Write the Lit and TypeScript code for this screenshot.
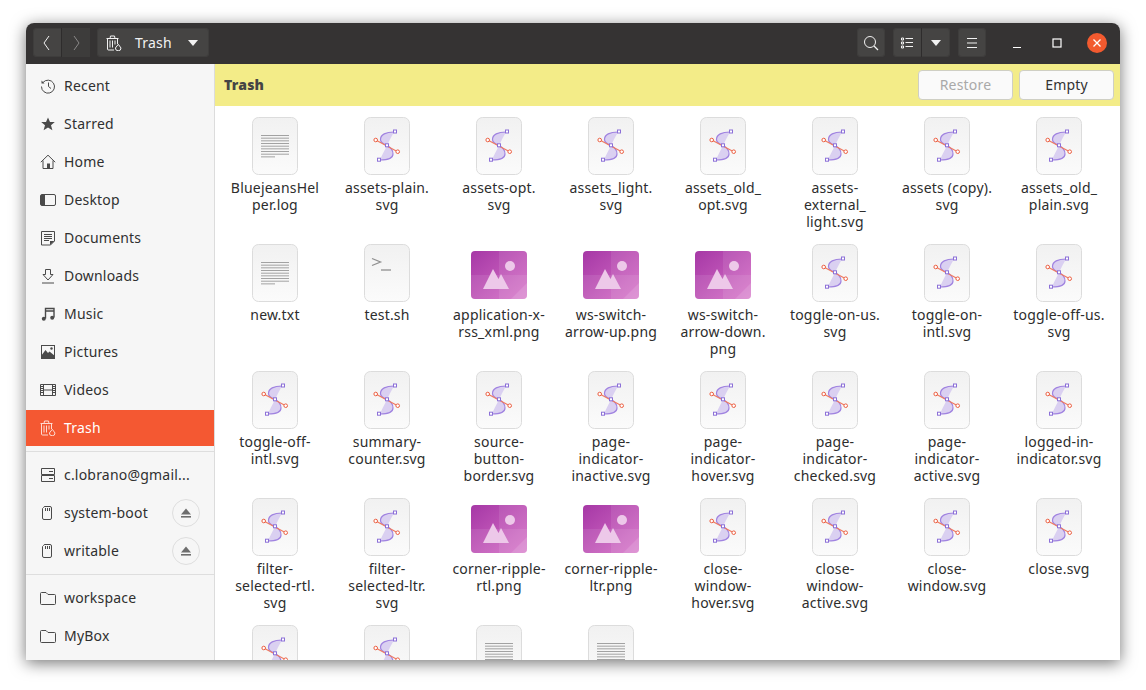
import { LitElement, html, svg, css } from "lit";
import { customElement } from "lit/decorators.js";

type Kind = "doc" | "svg" | "term" | "png";

const files: [string, Kind][] = [
  ["BluejeansHel\nper.log", "doc"],
  ["assets-plain.\nsvg", "svg"],
  ["assets-opt.\nsvg", "svg"],
  ["assets_light.\nsvg", "svg"],
  ["assets_old_\nopt.svg", "svg"],
  ["assets-\nexternal_\nlight.svg", "svg"],
  ["assets (copy).\nsvg", "svg"],
  ["assets_old_\nplain.svg", "svg"],
  ["new.txt", "doc"],
  ["test.sh", "term"],
  ["application-x-\nrss_xml.png", "png"],
  ["ws-switch-\narrow-up.png", "png"],
  ["ws-switch-\narrow-down.\npng", "png"],
  ["toggle-on-us.\nsvg", "svg"],
  ["toggle-on-\nintl.svg", "svg"],
  ["toggle-off-us.\nsvg", "svg"],
  ["toggle-off-\nintl.svg", "svg"],
  ["summary-\ncounter.svg", "svg"],
  ["source-\nbutton-\nborder.svg", "svg"],
  ["page-\nindicator-\ninactive.svg", "svg"],
  ["page-\nindicator-\nhover.svg", "svg"],
  ["page-\nindicator-\nchecked.svg", "svg"],
  ["page-\nindicator-\nactive.svg", "svg"],
  ["logged-in-\nindicator.svg", "svg"],
  ["filter-\nselected-rtl.\nsvg", "svg"],
  ["filter-\nselected-ltr.\nsvg", "svg"],
  ["corner-ripple-\nrtl.png", "png"],
  ["corner-ripple-\nltr.png", "png"],
  ["close-\nwindow-\nhover.svg", "svg"],
  ["close-\nwindow-\nactive.svg", "svg"],
  ["close-\nwindow.svg", "svg"],
  ["close.svg", "svg"],
  ["", "svg"],
  ["", "svg"],
  ["", "doc"],
  ["", "doc"],
];

const sheet = svg`
  <defs>
    <linearGradient id="sh" x1="0" y1="0" x2="0" y2="1">
      <stop offset="0" stop-color="#f1f1f1"/>
      <stop offset="1" stop-color="#fbfbfb"/>
    </linearGradient>
  </defs>
  <rect x=".5" y=".5" width="45" height="57" rx="6" fill="url(#sh)" stroke="#dcdcdc"/>`;

function docIcon() {
  const lines = [];
  for (let i = 0; i < 9; i++) {
    const y = 18.5 + i * 2.67;
    lines.push(svg`<line x1="9" x2=${i === 8 ? 23 : 37} y1=${y} y2=${y} stroke="#a2a2a2"/>`);
  }
  return html`<svg width="46" height="58" viewBox="0 0 46 58">${sheet}${lines}</svg>`;
}

function svgIcon() {
  return html`<svg width="46" height="58" viewBox="0 0 46 58">
    ${sheet}
    <path d="M30 15C22 15 16.5 17.5 16.5 22.5C16.5 26 20 27 23 28.5C26 30 29 32 29 37C29 41 24 43 16 43C18 38 20.500 33.500 23 28.500C25 24 27.500 19.500 30 15Z" fill="#dad0f1"/>
    <path d="M30 15C22 15 16.500 17.500 16.500 22.500C16.500 26 20 27 23 28.500C26 30 29 32 29 37C29 41 24 43 16 43" fill="none" stroke="#a083e0" stroke-width="1.2"/>
    <path d="M11.7 23L33.7 34.7" stroke="#f07a60" stroke-width="1.2"/>
    <circle cx="11.7" cy="23" r="1.8" fill="#fff" stroke="#ec5f42"/>
    <circle cx="33.7" cy="34.7" r="1.8" fill="#fff" stroke="#ec5f42"/>
    <rect x="29.500" y="13" width="3" height="3" fill="#fff" stroke="#8c70d8"/>
    <rect x="21.500" y="26.800" width="3" height="3" fill="#fff" stroke="#8c70d8"/>
    <rect x="13.500" y="41.200" width="3" height="3" fill="#fff" stroke="#8c70d8"/>
  </svg>`;
}

function termIcon() {
  return html`<svg width="46" height="58" viewBox="0 0 46 58">
    ${sheet}
    <path d="M8 14.500L16.500 18L8 21.500" fill="none" stroke="#8f8f8f" stroke-width="1.300"/>
    <path d="M17 26H27" stroke="#8f8f8f" stroke-width="1.300"/>
  </svg>`;
}

function pngIcon() {
  return html`<svg class="png" width="56" height="48" viewBox="0 0 56 48">
    <defs>
      <linearGradient id="pg" x1="0" y1="0" x2="1" y2="1">
        <stop offset="0" stop-color="#a638a6"/>
        <stop offset="1" stop-color="#d56fc6"/>
      </linearGradient>
    </defs>
    <rect width="56" height="48" rx="4" fill="url(#pg)"/>
    <path d="M28 0H52a4 4 0 0 1 4 4V44a4 4 0 0 1-4 4H28Z" fill="#fff" fill-opacity=".09"/>
    <path d="M0 24H56V44a4 4 0 0 1-4 4H4a4 4 0 0 1-4-4Z" fill="#fff" fill-opacity=".09"/>
    <path d="M56 32V44a4 4 0 0 1-4 4H40Z" fill="#fff" fill-opacity=".12"/>
    <circle cx="39" cy="15" r="5" fill="#edc8e9"/>
    <path d="M12 38L22 18L27.500 28L30 23L38 38Z" fill="#edc8e9"/>
  </svg>`;
}

const icons: Record<Kind, () => unknown> = { doc: docIcon, svg: svgIcon, term: termIcon, png: pngIcon };

// icono de papelera, se usa en la barra y en la lista
const trashPaths = svg`
  <path d="M.5 3.500H12.500M4 3.500L4.500 1H8.500L9 3.500" fill="none" stroke="currentColor"/>
  <path d="M1.500 3.500V14A1 1 0 0 0 2.500 15H8M11.500 3.500V9" fill="none" stroke="currentColor"/>
  <path d="M4 5.500V12.500M6.500 5.500V12.500M9 5.500V9.500" stroke="currentColor"/>
  <path d="M12.300 9.300L15 13A2.800 2.800 0 0 1 9.400 13Z" fill="none" stroke="currentColor"/>`;

const sideIcons: Record<string, unknown> = {
  recent: svg`<path d="M3 4.500A6.500 6.500 0 1 1 1.500 8.500" fill="none" stroke="currentColor"/><path d="M1.500 2.500V5.500H4.500Z" fill="currentColor"/><path d="M8.500 4.500V8.500L11 10.500" fill="none" stroke="currentColor"/>`,
  star: svg`<path d="M8 1.500L10 6H14.800L11 9.200L12.400 14.200L8 11.400L3.600 14.200L5 9.200L1.200 6H6Z" fill="currentColor"/>`,
  home: svg`<path d="M.8 8.200L8 1.200L15.200 8.200" fill="none" stroke="currentColor"/><path d="M3 6.500V14.500H13V6.500" fill="none" stroke="currentColor"/><path d="M7 14.500V9.500H10V14.500" fill="currentColor"/>`,
  desktop: svg`<rect x=".5" y="2.500" width="15" height="11" rx="1.500" fill="none" stroke="currentColor"/><path d="M1 3H5V13H1Z" fill="currentColor"/>`,
  docs: svg`<path d="M1.500 1.500H14.500V11L10.500 15H1.500Z" fill="none" stroke="currentColor"/><path d="M4 4.500H12M4 6.500H12M4 8.500H12M4 10.500H9" stroke="currentColor"/><path d="M10 15V11H14.500Z" fill="currentColor"/>`,
  down: svg`<path d="M5.500 1.500H10.500V6.500H13L8 12L3 6.500H5.500Z" fill="none" stroke="currentColor"/><path d="M2 15H14" stroke="currentColor"/>`,
  music: svg`<path d="M5.500 12.500V2.500H14V11.500M5.500 5H14" fill="none" stroke="currentColor" stroke-width="1.400"/><circle cx="3.800" cy="12.800" r="2" fill="currentColor"/><circle cx="12.200" cy="11.800" r="2" fill="currentColor"/>`,
  pics: svg`<rect x="1.500" y="1.500" width="13" height="13" fill="none" stroke="currentColor"/><path d="M1 12L5.500 6L8 9L9.500 7.500L15 12V15H1Z" fill="currentColor"/><circle cx="11.500" cy="4.500" r="1.200" fill="currentColor"/>`,
  video: svg`<path d="M.5 2.500H15.500V13.500H.5ZM3.500 2.500V13.500M12.500 2.500V13.500M3.500 8H12.500" fill="none" stroke="currentColor"/><path d="M1 4.500H3M1 6.500H3M1 8.500H3M1 10.500H3M13 4.500H15M13 6.500H15M13 8.500H15M13 10.500H15" stroke="currentColor"/>`,
  trash: trashPaths,
  server: svg`<path d="M1.500 1.500H14.500V7.500H1.500ZM1.500 8.500H14.500V14.500H1.500Z" fill="none" stroke="currentColor"/><path d="M9 4.500H13M9 11.500H13" stroke="currentColor"/>`,
  disk: svg`<path d="M3.500 2.500A1.500 1.500 0 0 1 5 1.500H10A1.500 1.500 0 0 1 11.500 3V13A1.500 1.500 0 0 1 10 14.500H4A1.500 1.500 0 0 1 2.500 13V3.500Z" fill="none" stroke="currentColor"/><path d="M5.500 3V6M7.500 3V6M9.500 3V6" stroke="currentColor"/>`,
  folder: svg`<path d="M.5 3.500A1 1 0 0 1 1.500 2.500H6L8 4.500H14.500A1 1 0 0 1 15.500 5.500V13.500A1 1 0 0 1 14.500 14.500H1.500A1 1 0 0 1 .5 13.500Z" fill="none" stroke="currentColor"/>`,
};

const sideGroups: { icon: string; label: string; selected?: boolean; eject?: boolean }[][] = [
  [
    { icon: "recent", label: "Recent" },
    { icon: "star", label: "Starred" },
    { icon: "home", label: "Home" },
    { icon: "desktop", label: "Desktop" },
    { icon: "docs", label: "Documents" },
    { icon: "down", label: "Downloads" },
    { icon: "music", label: "Music" },
    { icon: "pics", label: "Pictures" },
    { icon: "video", label: "Videos" },
    { icon: "trash", label: "Trash", selected: true },
  ],
  [
    { icon: "server", label: "c.lobrano@gmail..." },
    { icon: "disk", label: "system-boot", eject: true },
    { icon: "disk", label: "writable", eject: true },
  ],
  [
    { icon: "folder", label: "workspace" },
    { icon: "folder", label: "MyBox" },
  ],
];

@customElement("app-root")
export class AppRoot extends LitElement {
  static styles = css`
    :host {
      display: block;
      height: 690px;
      padding: 23px 26px 0;
      box-sizing: border-box;
      background: #fff;
      font-family: "Noto Sans", sans-serif;
      font-size: 14px;
      letter-spacing: 0.2px;
      color: #2f2f2f;
    }
    .window {
      height: 637px;
      display: flex;
      flex-direction: column;
      border-radius: 8px 8px 0 0;
      overflow: hidden;
      background: #fff;
      box-shadow: 0 3px 16px rgba(0, 0, 0, 0.55);
    }
    .titlebar {
      flex: none;
      height: 41px;
      box-sizing: border-box;
      padding: 5px 0 0 7px;
      display: flex;
      background: #353333;
      color: #f2f2f2;
    }
    .group {
      display: flex;
      height: 29px;
      border-radius: 4px;
      background: #454443;
      box-shadow: inset 0 0 0 1px #3e3d3c;
    }
    .tb {
      width: 28px;
      display: flex;
      align-items: center;
      justify-content: center;
    }
    .tb + .tb {
      border-left: 1px solid #2e2c2c;
    }
    .tb.off {
      color: #8a8988;
      background: #3d3c3b;
    }
    .nav {
      margin-right: 7px;
    }
    .pathbar {
      width: 112px;
      align-items: center;
      padding-left: 9px;
      box-sizing: border-box;
    }
    .pathbar span {
      margin: 0 15px 0 13px;
    }
    .spacer {
      flex: 1;
    }
    .search {
      margin-right: 8px;
    }
    .view {
      margin-right: 8px;
    }
    .wm {
      width: 134px;
      height: 29px;
      box-sizing: border-box;
      padding-left: 11px;
      display: flex;
      align-items: center;
    }
    .wm div {
      width: 40px;
      display: flex;
      justify-content: center;
    }
    .close {
      width: 20px;
      height: 20px;
      border-radius: 50%;
      background: #f25a2f;
      display: flex;
      align-items: center;
      justify-content: center;
    }
    .body {
      flex: 1;
      display: flex;
      min-height: 0;
    }
    .sidebar {
      flex: none;
      width: 189px;
      box-sizing: border-box;
      padding-top: 4px;
      background: #f6f6f6;
      border-right: 1px solid #dcdcdc;
      color: #333;
    }
    .sep {
      height: 1px;
      margin: 5px 0;
      background: #dedede;
    }
    .row {
      height: 36px;
      margin-bottom: 2px;
      padding-left: 14px;
      display: flex;
      align-items: center;
      gap: 8px;
      color: #303030;
    }
    .row span {
      margin-top: -2px;
    }
    .row svg {
      flex: none;
      color: #4a4a4a;
    }
    .row.selected {
      background: #f45832;
      color: #fff;
    }
    .row.selected svg {
      color: #fddbd2;
    }
    .row:last-child {
      margin-bottom: 0;
    }
    .eject {
      margin: 0 14px 0 auto;
      width: 26px;
      height: 26px;
      border: 1px solid #dedede;
      border-radius: 50%;
      display: flex;
      align-items: center;
      justify-content: center;
    }
    .main {
      flex: 1;
      min-width: 0;
      display: flex;
      flex-direction: column;
    }
    .infobar {
      flex: none;
      height: 42px;
      box-sizing: border-box;
      padding: 6px 6px 6px 9px;
      display: flex;
      align-items: center;
      gap: 6px;
      background: #f3ec88;
      font-weight: 700;
      color: #454545;
    }
    .infobar b {
      flex: 1;
      margin-top: -2px;
    }
    .btn {
      width: 95px;
      height: 30px;
      box-sizing: border-box;
      padding-bottom: 2px;
      border: 1px solid #cfcfc4;
      border-radius: 4px;
      background: #fafafa;
      display: flex;
      align-items: center;
      justify-content: center;
      font-weight: 400;
      color: #333;
    }
    .btn.off {
      color: #a9a9a9;
    }
    .grid {
      flex: 1;
      min-height: 0;
      overflow: hidden;
      padding: 11px 0 0 4px;
      display: grid;
      grid-template-columns: repeat(8, 112px);
      grid-auto-rows: 127px;
    }
    .file {
      display: flex;
      flex-direction: column;
      align-items: center;
    }
    .thumb {
      height: 58px;
      margin-bottom: 4px;
      flex: none;
    }
    .thumb svg {
      display: block;
    }
    .thumb .png {
      margin-top: 7px;
    }
    .name {
      white-space: pre;
      text-align: center;
      line-height: 17px;
      color: #2d2d2d;
    }
  `;

  sideRow(item: { icon: string; label: string; selected?: boolean; eject?: boolean }) {
    return html`
      <div class="row ${item.selected ? "selected" : ""}">
        <svg width="16" height="16" viewBox="0 0 16 16">${sideIcons[item.icon]}</svg>
        <span>${item.label}</span>
        ${item.eject
          ? html`<div class="eject">
              <svg width="12" height="12" viewBox="0 0 12 12">
                <path d="M6 1.500L11 7.500H1Z" fill="#6e6e6e"/><rect x="1" y="9" width="10" height="1.600" fill="#6e6e6e"/>
              </svg>
            </div>`
          : ""}
      </div>
    `;
  }

  render() {
    return html`
      <div class="window">
        <div class="titlebar">
          <div class="group nav">
            <div class="tb">
              <svg width="16" height="16" viewBox="0 0 16 16"><path d="M10 1L5 8L10 15" fill="none" stroke="currentColor"/></svg>
            </div>
            <div class="tb off">
              <svg width="16" height="16" viewBox="0 0 16 16"><path d="M6 1L11 8L6 15" fill="none" stroke="currentColor"/></svg>
            </div>
          </div>
          <div class="group pathbar">
            <svg width="16" height="16" viewBox="0 0 16 16">${trashPaths}</svg>
            <span>Trash</span>
            <svg width="12" height="6" viewBox="0 0 12 6"><path d="M1 0H11L6 6Z" fill="currentColor"/></svg>
          </div>
          <div class="spacer"></div>
          <div class="group search">
            <div class="tb">
              <svg width="16" height="16" viewBox="0 0 16 16">
                <circle cx="7" cy="7" r="5.500" fill="none" stroke="currentColor"/><path d="M11 11L15 15" stroke="currentColor" stroke-width="1.200"/>
              </svg>
            </div>
          </div>
          <div class="group view">
            <div class="tb">
              <svg width="14" height="14" viewBox="0 0 14 14">
                <path d="M1.500 2H3.500V4H1.500ZM1.500 6H3.500V8H1.500ZM1.500 10H3.500V12H1.500Z" fill="none" stroke="currentColor"/>
                <path d="M5.500 2.500H13M5.500 6.500H13M5.500 10.500H13" stroke="currentColor"/>
              </svg>
            </div>
            <div class="tb">
              <svg width="12" height="6" viewBox="0 0 12 6"><path d="M1 0H11L6 6Z" fill="currentColor"/></svg>
            </div>
          </div>
          <div class="group">
            <div class="tb">
              <svg width="12" height="12" viewBox="0 0 12 12"><path d="M1 1.500H11M1 6H11M1 10.500H11" stroke="currentColor"/></svg>
            </div>
          </div>
          <div class="wm">
            <div><svg width="10" height="10" viewBox="0 0 10 10"><path d="M1 9.500H9" stroke="#fff"/></svg></div>
            <div><svg width="10" height="10" viewBox="0 0 10 10"><rect x="1" y="1" width="8" height="8" fill="none" stroke="#fff" stroke-width="1.200"/></svg></div>
            <div>
              <span class="close">
                <svg width="10" height="10" viewBox="0 0 10 10"><path d="M1.500 1.500L8.500 8.500M8.500 1.500L1.500 8.500" stroke="#fff" stroke-width="1.300"/></svg>
              </span>
            </div>
          </div>
        </div>
        <div class="body">
          <div class="sidebar">
            ${sideGroups.map(
              (g, i) => html`
                ${i > 0 ? html`<div class="sep"></div>` : ""}
                ${g.map((item) => this.sideRow(item))}
              `
            )}
          </div>
          <div class="main">
            <div class="infobar">
              <b>Trash</b>
              <div class="btn off">Restore</div>
              <div class="btn">Empty</div>
            </div>
            <div class="grid">
              ${files.map(
                ([name, kind]) => html`
                  <div class="file">
                    <div class="thumb">${icons[kind]()}</div>
                    <div class="name">${name}</div>
                  </div>
                `
              )}
            </div>
          </div>
        </div>
      </div>
    `;
  }
}
